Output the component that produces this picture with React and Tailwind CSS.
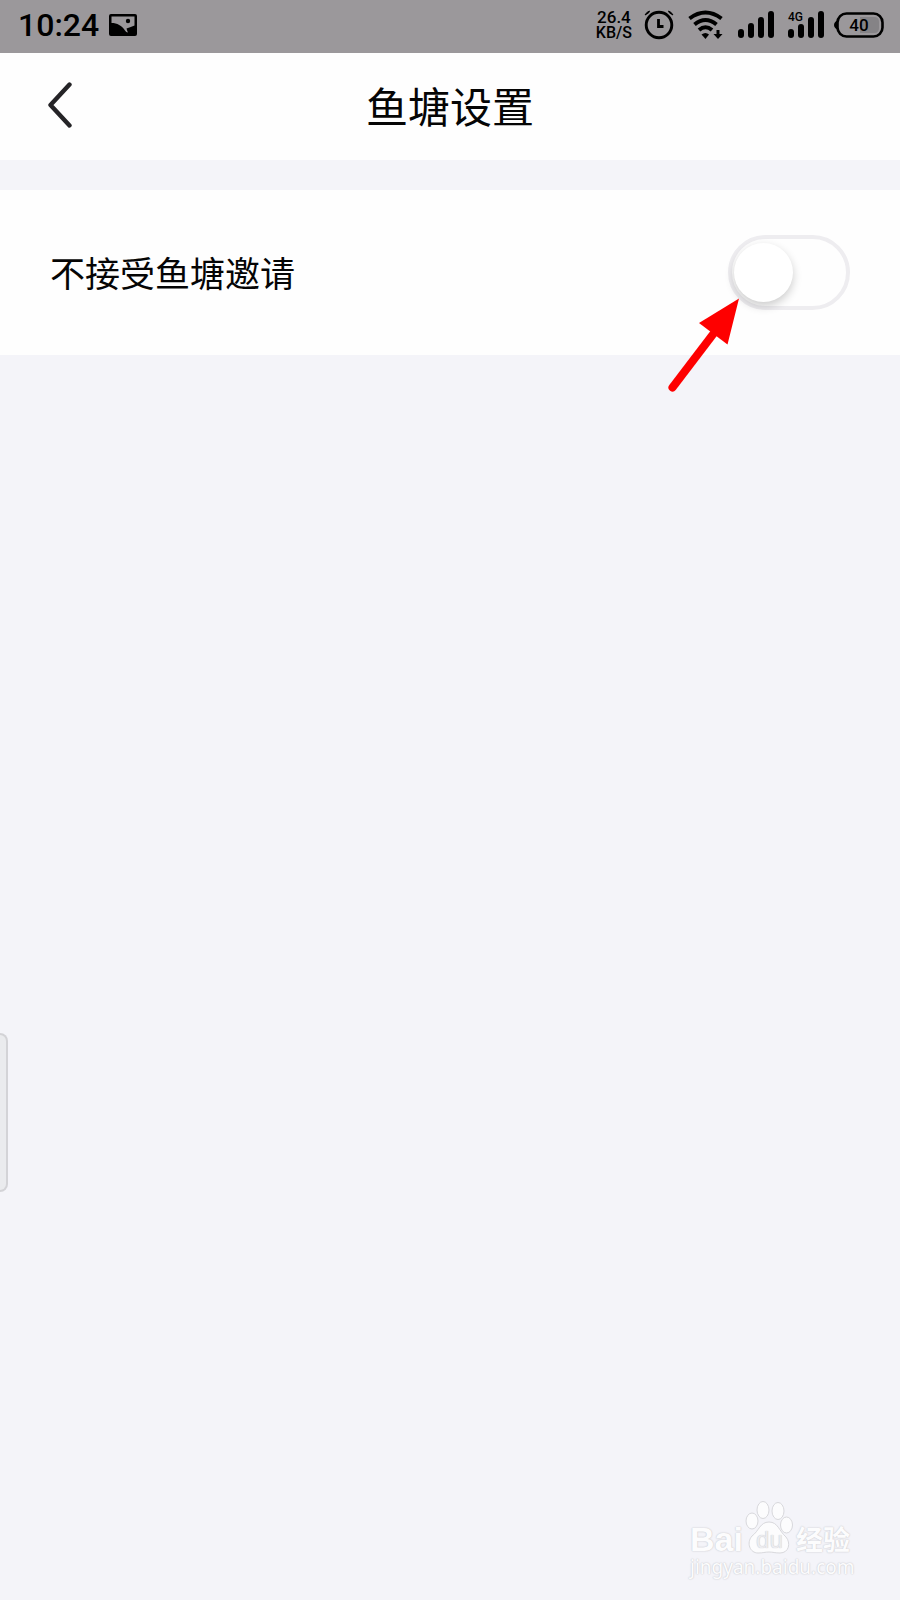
import { useState } from 'react';

function PictureIcon() {
  return (
    <svg viewBox="0 0 28 22" className="h-[22px] w-7" aria-hidden="true">
      <path
        fillRule="evenodd"
        d="M2 0H26Q28 0 28 2V20Q28 22 26 22H2Q0 22 0 20V2Q0 0 2 0ZM2.500 2.500V9C8 9 13 11.500 16 16.500Q17 18.500 19 18.500Q18 16.500 17.500 14.500Q22 13 25.500 11.500V2.500Z"
      />
      <circle cx="19" cy="7" r="2.200" />
    </svg>
  );
}

function AlarmIcon() {
  return (
    <svg viewBox="0 0 30 30" className="h-[30px] w-[30px]" fill="none" stroke="black" aria-hidden="true">
      <circle cx="15" cy="15" r="12.800" strokeWidth="2.900" />
      <path d="M14.500 9V16.500H19.500" strokeWidth="2.800" />
      <path d="M1 5Q2.500 2 5.500 1L4.500 3ZM29 5Q27.500 2 24.500 1L25.500 3Z" strokeWidth="1" fill="black" />
    </svg>
  );
}

function WifiIcon() {
  return (
    <svg viewBox="0 0 36 30" className="h-[30px] w-9" fill="none" stroke="black" aria-hidden="true">
      <path d="M1.500 8.500Q17.500-3.500 33.500 8.500" strokeWidth="4" />
      <path d="M6.500 14.500Q17.500 5.500 28.500 14.500" strokeWidth="4" />
      <path d="M11 20Q17.500 14.500 24 20" strokeWidth="4" />
      <path d="M13.500 24.500Q17.500 21.500 21 24.500L17.500 29Z" fill="black" stroke="none" />
      <path d="M30 20V25" strokeWidth="3" />
      <path d="M25.500 24H34.500L30 29Z" fill="black" stroke="none" />
    </svg>
  );
}

function SignalIcon({ network }) {
  return (
    <svg viewBox="0 0 36 28" className="h-7 w-9" aria-hidden="true">
      <rect x="0" y="18" width="6" height="9" rx="3" />
      <rect x="10" y={network ? 13 : 12} width="6" height={network ? 14 : 15} rx="3" />
      <rect x="20" y="6" width="6" height="21" rx="3" />
      <rect x="30" y="0" width="6" height="27" rx="3" />
    </svg>
  );
}

function BatteryIcon() {
  return (
    <svg viewBox="0 0 50 26" className="h-[26px] w-[50px]" aria-hidden="true">
      <path d="M4 8Q0 10 0 13Q0 16 4 18Z" />
      <rect x="3.500" y="1.500" width="45" height="23" rx="9" fill="none" stroke="black" strokeWidth="2.600" />
      <path d="M26 5H40Q45 5 45 10V16Q45 21 40 21H26Z" fill="#858386" />
      <text x="25" y="19" textAnchor="middle" className="font-['Roboto',sans-serif] text-[17px] font-medium">40</text>
    </svg>
  );
}

function StatusBar() {
  return (
    <div className="flex h-[53px] items-center justify-between bg-[#9b989b] pr-4 pb-[3px] pl-[18px] font-['Roboto',sans-serif] font-medium text-black">
      <div className="flex items-center gap-[10px]">
        <span className="text-[32px] leading-8">10:24</span>
        <PictureIcon />
      </div>
      <div className="flex items-center">
        <div className="mr-3 flex flex-col items-center">
          <span className="text-[17px] leading-[15px]">26.4</span>
          <span className="text-base leading-[15px]">KB/S</span>
        </div>
        <div className="flex items-center gap-[14px]">
          <AlarmIcon />
          <WifiIcon />
          <SignalIcon />
          <div className="relative">
            <SignalIcon network />
            <span className="absolute top-0 left-0 text-xs leading-3">4G</span>
          </div>
        </div>
        <div className="ml-[10px]">
          <BatteryIcon />
        </div>
      </div>
    </div>
  );
}

function Header() {
  return (
    <header className="grid h-[107px] grid-cols-[1fr_auto_1fr] items-center bg-[#fefefe] px-10 pb-[3px]">
      <button type="button" aria-label="返回" className="flex w-10 justify-center">
        <svg viewBox="0 0 24 46" className="h-[46px] w-6" fill="none" stroke="#252427" strokeWidth="4.400" strokeLinecap="round" strokeLinejoin="round">
          <path d="M21.500 2.500L2.500 23L21.500 43.500" />
        </svg>
      </button>
      <h1 className="text-[42px] leading-[60px]">鱼塘设置</h1>
    </header>
  );
}

function PointerArrow() {
  return (
    <svg viewBox="0 0 71 95" className="pointer-events-none absolute top-[62px] -left-[60px] h-[95px] w-[71px]" aria-hidden="true">
      <path d="M4.500 90.500L46 36" stroke="#fe0000" strokeWidth="8" strokeLinecap="round" />
      <path d="M71 1.500L31 26L59.500 47.500Z" fill="#fe0000" />
    </svg>
  );
}

function SettingRow() {
  const [declined, setDeclined] = useState(false);
  return (
    <section className="flex h-[165px] items-center justify-between bg-[#fefefe] px-[50px]">
      <label htmlFor="decline-invites" className="pb-[2px] text-[35px] leading-[50px]">不接受鱼塘邀请</label>
      <div className="relative flex">
        <input
          id="decline-invites"
          type="checkbox"
          role="switch"
          checked={declined}
          onChange={(e) => setDeclined(e.target.checked)}
          className="flex h-[75px] w-[122px] appearance-none items-center rounded-full border-4 border-[#eeedf0] bg-[#fefefe] px-[2px] before:h-[59px] before:w-[59px] before:rounded-full before:bg-white before:shadow-[0_4px_10px_rgba(0,0,0,0.2)] before:content-[''] checked:justify-end checked:bg-yellow-300"
        />
        <PointerArrow />
      </div>
    </section>
  );
}

function Watermark() {
  return (
    <div className="absolute right-[50px] bottom-5 flex w-40 flex-col text-[#fcfcfd] [text-shadow:0_0_2px_#cfcfd4,0_0_1px_#c8c8cc]">
      <div className="flex h-[54px] items-end justify-between">
        <span className="font-['Liberation_Sans',sans-serif] text-[34px] leading-[30px] font-bold">Bai</span>
        <div className="relative flex h-[54px] w-12 items-end justify-center">
          <svg viewBox="0 0 48 54" className="absolute inset-0 h-[54px] w-12" fill="#fcfcfd" stroke="#d8d8dc" strokeWidth="1" aria-hidden="true">
            <ellipse cx="7" cy="21" rx="6" ry="8" />
            <ellipse cx="18" cy="10" rx="6" ry="8.500" />
            <ellipse cx="33" cy="11" rx="6" ry="8.500" />
            <ellipse cx="41.500" cy="25" rx="6" ry="8" />
            <path d="M24 22C15 22 14 31 7 36C1 43 5 53 13 53C18 53 20 52 24 52C28 52 30 53 35 53C44 53 46 43 41 37C34 31 33 22 24 22Z" />
          </svg>
          <span className="relative font-['Liberation_Sans',sans-serif] text-2xl leading-7 text-[#ececf0] [text-shadow:0_0_1px_#b8b8bc]">du</span>
        </div>
        <span className="text-[27px] leading-[30px] font-bold">经验</span>
      </div>
      <span className="font-['Noto_Sans',sans-serif] text-[19px] leading-[26px]">jingyan.baidu.com</span>
    </div>
  );
}

export default function App() {
  return (
    <div className="relative min-h-screen overflow-hidden bg-[#f4f4f9] font-['Noto_Sans_CJK_SC',sans-serif] text-[#050505]">
      <StatusBar />
      <Header />
      <main className="pt-[30px]">
        <SettingRow />
      </main>
      <button
        type="button"
        aria-label="侧边栏"
        className="absolute top-[1033px] left-0 h-[159px] w-2 rounded-r-lg border-2 border-l-0 border-[#d3d3d7] bg-[#eaebee]"
      />
      <Watermark />
    </div>
  );
}
